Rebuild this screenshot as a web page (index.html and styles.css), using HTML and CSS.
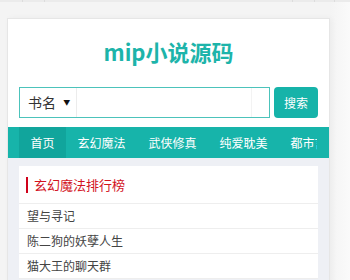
FILE: index.html
```html
<!DOCTYPE html>
<html lang="zh">
<head>
<meta charset="utf-8">
<link rel="stylesheet" href="styles.css">
</head>
<body>
<div class="topstrip"><span></span><span></span><span></span><span></span><span></span></div>
<div class="page">
  <div class="card">
    <h1 class="title">mip小说源码</h1>
    <form class="search">
      <div class="box">
        <div class="select">书名 <span class="caret">▼</span></div>
        <div class="input"></div>
      </div>
      <button type="button" class="btn">搜索</button>
    </form>
    <nav class="nav">
      <div class="nav-inner">
        <a class="nav-item active">首页</a>
        <a class="nav-item">玄幻魔法</a>
        <a class="nav-item">武侠修真</a>
        <a class="nav-item">纯爱耽美</a>
        <a class="nav-item">都市言情</a>
      </div>
    </nav>
    <div class="content">
      <div class="panel">
        <div class="panel-head"><span class="bar"></span>玄幻魔法排行榜</div>
        <ul class="list">
          <li>望与寻记</li>
          <li>陈二狗的妖孽人生</li>
          <li>猫大王的聊天群</li>
        </ul>
      </div>
    </div>
  </div>
</div>
</body>
</html>
```
FILE: styles.css
```css
* { box-sizing: border-box; }
html, body { margin: 0; padding: 0; }
body {
  background: linear-gradient(to right, #f4f4f4 0, #f4f4f4 330px, #fafafa 350px);
  font-family: "Noto Sans CJK SC", "Liberation Sans", sans-serif;
  height: 280px;
  overflow: hidden;
}
.topstrip {
  height: 2px;
  background: #ebebeb;
  display: flex;
}
.topstrip span { width: 1px; background: #dcdcdc; }
.topstrip span:nth-child(1) { margin-left: 22px; }
.topstrip span:nth-child(2) { margin-left: 21px; }
.topstrip span:nth-child(3) { margin-left: 247px; }
.topstrip span:nth-child(4) { margin-left: 21px; }
.topstrip span:nth-child(5) { margin-left: 19px; }
.page {
  padding: 16px 0 0 7px;
}
.card {
  width: 323px;
  background: #fff;
  border: 1px solid #e6e6e6;
  border-bottom: none;
  box-shadow: 2px 0 6px rgba(0,0,0,0.04);
  height: 270px;
  overflow: hidden;
}
.title {
  margin: 0;
  padding-top: 17px;
  text-align: center;
  font-size: 22px;
  line-height: 30px;
  font-weight: bold;
  color: #1db4aa;
}
.search {
  margin: 21px 11px 0 11px;
  display: flex;
  gap: 4px;
  height: 31px;
}
.box {
  flex: 1;
  display: flex;
  border: 1px solid #4cc3bb;
}
.select {
  width: 57px;
  border-right: 1px solid #ececec;
  font-size: 14px;
  color: #333;
  line-height: 29px;
  padding-left: 8px;
  white-space: nowrap;
}
.caret {
  font-size: 7px;
  vertical-align: 3px;
  margin-left: 4px;
  color: #111;
}
.input {
  flex: 1;
  border-right: 1px solid #f3f3f3;
  margin-right: 17px;
}
.btn {
  width: 44px;
  border: none;
  border-radius: 4px;
  background: #16b3a9;
  color: #fff;
  font-family: inherit;
  font-size: 12px;
  padding: 0;
}
.nav {
  margin-top: 9px;
  height: 31px;
  background: #17b4aa;
  padding: 0 12px 0 11px;
}
.nav-inner {
  display: flex;
  overflow: hidden;
  white-space: nowrap;
  height: 31px;
}
.nav-item {
  flex: none;
  padding: 0 11.5px;
  line-height: 31px;
  font-size: 12px;
  color: #fff;
}
.nav-item.active { background: #11a59c; }
.content {
  background: #eef0f5;
  padding: 8px 11px 0 11px;
  height: 200px;
}
.panel {
  background: #fff;
}
.panel-head {
  height: 38px;
  border-bottom: 1px solid #eeeeee;
  display: flex;
  align-items: center;
  padding-left: 7px;
  font-size: 13px;
  color: #d2121e;
}
.bar {
  width: 2px;
  height: 16px;
  background: #d0021b;
  margin-right: 6px;
}
.list {
  list-style: none;
  margin: 0;
  padding: 0;
}
.list li {
  height: 25px;
  line-height: 24px;
  border-bottom: 1px solid #eeeeee;
  padding-left: 8px;
  font-size: 12px;
  color: #444;
}
```
